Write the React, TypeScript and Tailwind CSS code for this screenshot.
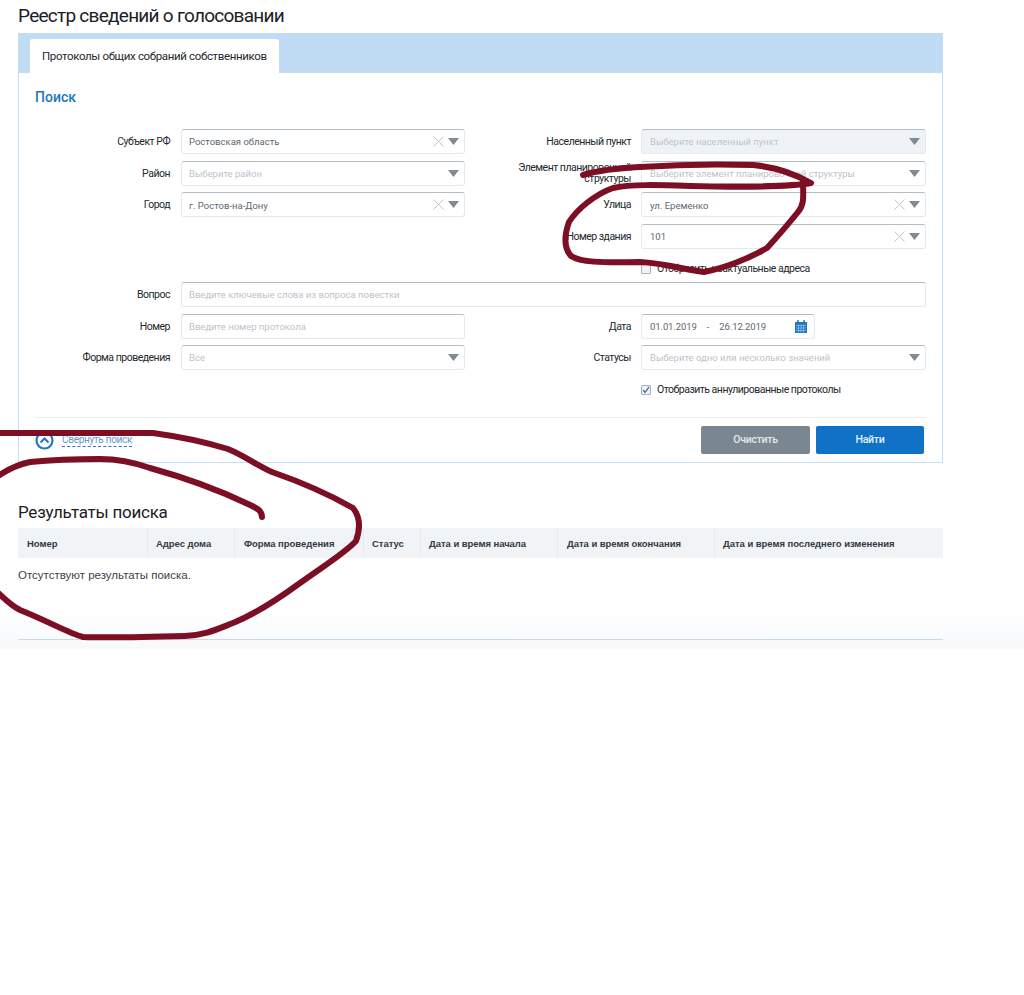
import type { ReactNode } from 'react'

const Triangle = () => (
  <svg width="11" height="7" viewBox="0 0 11 7" className="shrink-0">
    <path d="M0 0h11L5.5 7z" fill="#7f8a93" />
  </svg>
)

const Cross = () => (
  <svg width="11" height="11" viewBox="0 0 11 11" className="shrink-0 mr-[4px]">
    <path d="M.5.5l10 10M10.5.5l-10 10" stroke="#bcc4ca" strokeWidth="1" fill="none" />
  </svg>
)

const Input = ({
  value,
  placeholder,
  clear,
  arrow,
  disabled,
  className = 'w-[284px]',
}: {
  value?: string
  placeholder?: string
  clear?: boolean
  arrow?: boolean
  disabled?: boolean
  className?: string
}) => (
  <div
    className={`h-[25px] flex items-center pl-[7px] pr-[5px] rounded-[3px] border border-[#e6eaee] border-t-[#b5bcc2] ${
      disabled ? 'bg-[#eff3f8]' : 'bg-white'
    } ${className}`}
  >
    <span className={`flex-1 pt-[1.5px] text-[9.5px] ${value ? 'text-[#5d6770]' : 'text-[#bcc3ca]'}`}>
      {value ?? placeholder}
    </span>
    {clear && <Cross />}
    {arrow && <Triangle />}
  </div>
)

const Field = ({
  label,
  labelWidth,
  gap,
  children,
}: {
  label: ReactNode
  labelWidth: string
  gap: string
  children: ReactNode
}) => (
  <div className={`flex items-center ${gap}`}>
    <div className={`text-right text-[10.5px] leading-[11px] tracking-[-0.5px] whitespace-nowrap text-[#22282e] ${labelWidth}`}>{label}</div>
    {children}
  </div>
)

const Check = ({ checked, label }: { checked?: boolean; label: string }) => (
  <div className="flex items-center gap-[6px] text-[10.5px] tracking-[-0.5px] text-[#22282e]">
    <span className="w-[10px] h-[10px] flex items-center justify-center rounded-[1px] border border-[#a9b2ba] bg-[#f1f3f5]">
      {checked && (
        <svg width="8" height="8" viewBox="0 0 8 8">
          <path d="M1 4l2 2.5L7 1" stroke="#4d6f96" strokeWidth="1.3" fill="none" />
        </svg>
      )}
    </span>
    {label}
  </div>
)

const columns = [
  { title: 'Номер', width: 'w-[130px] pl-[9px]' },
  { title: 'Адрес дома', width: 'w-[87px] pl-[8px]' },
  { title: 'Форма проведения', width: 'w-[129px] pl-[9px]' },
  { title: 'Статус', width: 'w-[57px] pl-[8px]' },
  { title: 'Дата и время начала', width: 'w-[137px] pl-[8px]' },
  { title: 'Дата и время окончания', width: 'w-[157px] pl-[9px]' },
  { title: 'Дата и время последнего изменения', width: 'flex-1 pl-[8px]' },
]

const App = () => {
  return (
    <div className="relative w-[1024px] h-[995px] overflow-hidden bg-white font-['Roboto',sans-serif]">
      <div className="h-[649px] bg-gradient-to-b from-white from-[94%] to-[#f7f9fb] pl-[18px] pr-[81px]">
        <h1 className="h-[33px] pt-[5px] text-[19px] leading-[22px] tracking-[-0.73px] text-[#1c2024]">Реестр сведений о голосовании</h1>

        <div className="h-[430px] border border-[#c3def3] bg-white">
          <div className="h-[39px] bg-[#c0dcf5] pt-[5px] pl-[11px]">
            <div className="w-[249px] h-[34px] bg-white rounded-t-[3px] pl-[12px] pt-[10px] text-[11.5px] leading-[15px] tracking-[-0.35px] whitespace-nowrap text-[#26292d]">
              Протоколы общих собраний собственников
            </div>
          </div>

          <div className="px-[16px]">
            <h2 className="h-[56px] pt-[15px] text-[14px] leading-[18px] font-medium text-[#2277b5]">Поиск</h2>

            <div className="flex">
              <div className="w-[430px] flex flex-col gap-[6.7px]">
                <Field label="Субъект РФ" labelWidth="w-[135px]" gap="gap-[11px]">
                  <Input value="Ростовская область" clear arrow />
                </Field>
                <Field label="Район" labelWidth="w-[135px]" gap="gap-[11px]">
                  <Input placeholder="Выберите район" arrow />
                </Field>
                <Field label="Город" labelWidth="w-[135px]" gap="gap-[11px]">
                  <Input value="г. Ростов-на-Дону" clear arrow />
                </Field>
              </div>
              <div className="flex-1 flex flex-col gap-[6.7px] pl-[11px]">
                <Field label="Населенный пункт" labelWidth="w-[155px]" gap="gap-[10px]">
                  <Input placeholder="Выберите населенный пункт" arrow disabled className="w-[285px] pl-[8px]" />
                </Field>
                <Field label={<>Элемент планировочной<br />структуры</>} labelWidth="w-[155px]" gap="gap-[10px]">
                  <Input placeholder="Выберите элемент планировочной структуры" arrow className="w-[285px] pl-[8px]" />
                </Field>
                <Field label="Улица" labelWidth="w-[155px]" gap="gap-[10px]">
                  <Input value="ул. Еременко" clear arrow className="w-[285px] pl-[8px]" />
                </Field>
                <Field label="Номер здания" labelWidth="w-[155px]" gap="gap-[10px]">
                  <Input value="101" clear arrow className="w-[285px] pl-[8px]" />
                </Field>
                <div className="pl-[165px] h-[20px] pt-[7px] flex items-center">
                  <Check label="Отобразить неактуальные адреса" />
                </div>
              </div>
            </div>

            <div className="mt-[6.4px] flex flex-col gap-[6.5px]">
              <Field label="Вопрос" labelWidth="w-[135px]" gap="gap-[11px]">
                <Input placeholder="Введите ключевые слова из вопроса повестки" className="w-[745px]" />
              </Field>
              <div className="flex">
                <div className="w-[430px]">
                  <Field label="Номер" labelWidth="w-[135px]" gap="gap-[11px]">
                    <Input placeholder="Введите номер протокола" />
                  </Field>
                </div>
                <div className="flex-1 pl-[11px]">
                  <Field label="Дата" labelWidth="w-[155px]" gap="gap-[10px]">
                    <div className="w-[174px] h-[25px] flex items-center pl-[8px] pr-[7px] rounded-[3px] border border-[#e6eaee] border-t-[#b5bcc2] text-[9.5px] tracking-[-0.1px] text-[#5d6770]">
                      <span className="pt-[1px] flex-1 flex gap-[10px]">
                        <span>01.01.2019</span>
                        <span>-</span>
                        <span>26.12.2019</span>
                      </span>
                      <svg width="12" height="13" viewBox="0 0 12 13">
                        <path d="M0 2h12v11H0z" fill="#2277c4" />
                        <path d="M3 0v3M9 0v3" stroke="#2277c4" strokeWidth="1.5" />
                        <path d="M1 5.5h10M1 8h10M1 10.5h10M3.5 4.5v8M6 4.5v8M8.5 4.5v8" stroke="#a9cdec" strokeWidth=".6" />
                      </svg>
                    </div>
                  </Field>
                </div>
              </div>
              <div className="flex">
                <div className="w-[430px]">
                  <Field label="Форма проведения" labelWidth="w-[135px]" gap="gap-[11px]">
                    <Input placeholder="Все" arrow />
                  </Field>
                </div>
                <div className="flex-1 pl-[11px]">
                  <Field label="Статусы" labelWidth="w-[155px]" gap="gap-[10px]">
                    <Input placeholder="Выберите одно или несколько значений" arrow className="w-[285px] pl-[8px]" />
                  </Field>
                  <div className="pl-[165px] mt-[13px] h-[14px] flex items-center">
                    <Check checked label="Отобразить аннулированные протоколы" />
                  </div>
                </div>
              </div>
            </div>

            <div className="mt-[20px] border-t border-[#ebeef1] pt-[8px] flex items-center justify-between pr-[2px]">
              <div className="flex items-center gap-[8px]">
                <svg width="19" height="19" viewBox="0 0 19 19">
                  <circle cx="9.5" cy="9.5" r="8" fill="none" stroke="#2277c4" strokeWidth="2.2" />
                  <path d="M5.5 11.5l4-4 4 4" fill="none" stroke="#2277c4" strokeWidth="2" />
                </svg>
                <span className="text-[10px] leading-[12px] tracking-[-0.3px] text-[#5e9bd0] border-b border-dashed border-[#2277c4]">Свернуть поиск</span>
              </div>
              <div className="flex gap-[6px] text-[10.5px] font-medium tracking-[-0.3px]">
                <button className="w-[109px] h-[28px] rounded-[2px] bg-[#7a8791] text-[#e4e8ea]">Очистить</button>
                <button className="w-[108px] h-[28px] rounded-[2px] bg-[#0f72c6] text-[#e8f2fb]">Найти</button>
              </div>
            </div>
          </div>
        </div>

        <h2 className="mt-[39px] h-[26px] text-[17px] leading-[20px] tracking-[-0.25px] text-[#1c2024]">Результаты поиска</h2>
        <div className="flex h-[30px] bg-[#f0f4f7] font-['Liberation_Sans',sans-serif] text-[9.5px] tracking-[-0.05px] font-bold text-[#33393f]">
          {columns.map((col) => (
            <div key={col.title} className={`flex items-center pt-[2px] border-r border-[#e6ebef] last:border-r-0 ${col.width}`}>
              {col.title}
            </div>
          ))}
        </div>
        <p className="mt-[11px] h-[70px] font-['Liberation_Sans',sans-serif] text-[11.5px] leading-[13px] text-[#3c4248]">
          Отсутствуют результаты поиска.
        </p>
        <div className="border-t border-[#c9dbe6]" />
      </div>

      {/* маркер поверх скриншота */}
      <svg width="1024" height="995" viewBox="0 0 1024 995" className="absolute inset-0 pointer-events-none" fill="none" stroke="#7d0f25" strokeWidth="6" strokeLinecap="round" strokeLinejoin="round">
        <path d="M583 175C600 170 620 168 640 167C670 165 720 164 753 165C775 167 795 174 811 183C790 187 730 187 690 186C660 185 630 184 613 188C596 194 578 208 569 222C564 236 564 248 571 256C580 262 600 263 640 262C665 263 690 271 704 272C725 268 750 258 767 248C778 236 790 222 798 212C805 204 803 195 803 180" />
        <path d="M-5 433C40 433 110 433 153 433C175 436 205 442 228 449C245 456 258 466 272 472C295 480 325 492 353 508C361 518 360 530 356 541C345 553 325 565 300 583C285 594 260 612 233 623C215 630 205 635 185 636C150 637 110 638 83 637C68 633 50 622 20 610C10 605 3 597 -5 590" />
        <path d="M262 517C262 510 256 508 248 504C225 493 190 479 150 468C130 461 115 459 100 459C75 459 50 460 30 462C15 465 5 471 -5 478" />
      </svg>
    </div>
  )
}

export default App
